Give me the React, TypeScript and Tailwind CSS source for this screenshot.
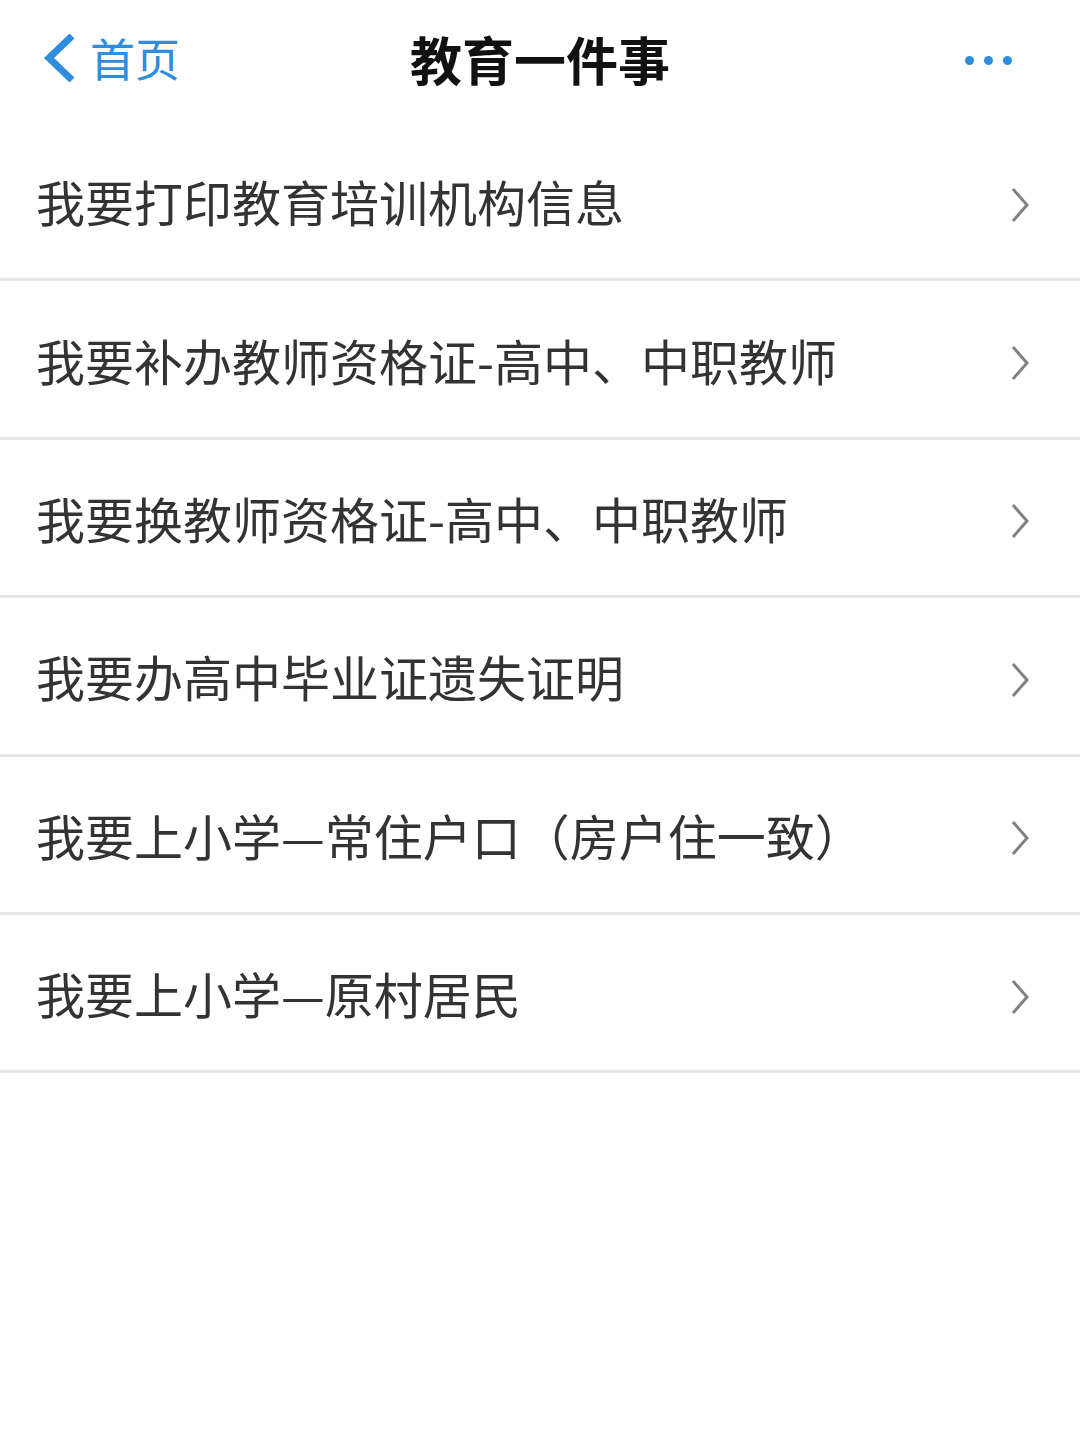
import React from 'react';

const items = [
  '我要打印教育培训机构信息',
  '我要补办教师资格证-高中、中职教师',
  '我要换教师资格证-高中、中职教师',
  '我要办高中毕业证遗失证明',
  '我要上小学—常住户口（房户住一致）',
  '我要上小学—原村居民',
];

const font = { fontFamily: '"Noto Sans CJK SC", "Noto Sans", sans-serif' };

export default function App() {
  return (
    <div className="w-[1080px] min-h-[1444px] bg-white" style={font}>
      {/* Nav bar */}
      <div className="h-[123px] flex items-center justify-between px-[42px] pb-[8px] relative">
        <div className="flex items-center gap-[14px] text-[#2e8ddd]">
          <svg width="34" height="48" viewBox="0 0 34 48" fill="none">
            <path d="M30 2 L7 24 L30 46" stroke="#2e8ddd" strokeWidth="7" strokeLinejoin="miter" />
          </svg>
          <span className="text-[45px] leading-none">首页</span>
        </div>
        <div className="absolute left-1/2 top-[33px] -translate-x-1/2 text-[52px] font-bold text-[#111] leading-none">
          教育一件事
        </div>
        <div className="flex items-center gap-[10px] pr-[26px] pt-[6px]">
          <span className="w-[9px] h-[9px] rounded-full bg-[#2e8ddd]" />
          <span className="w-[9px] h-[9px] rounded-full bg-[#2e8ddd]" />
          <span className="w-[9px] h-[9px] rounded-full bg-[#2e8ddd]" />
        </div>
      </div>

      {/* List */}
      <div>
        {items.map((t, i) => (
          <div
            key={i}
            className="h-[158.4px] flex items-center justify-between pl-[36px] pr-[50px] border-b-[3px] border-[#e6e6e6]"
          >
            <span className="text-[49px] text-[#333] leading-none">{t}</span>
            <svg width="20" height="36" viewBox="0 0 20 36" fill="none" className="mt-[8px]">
              <path d="M3 2 L17 18 L3 34" stroke="#808080" strokeWidth="3" />
            </svg>
          </div>
        ))}
      </div>
    </div>
  );
}
